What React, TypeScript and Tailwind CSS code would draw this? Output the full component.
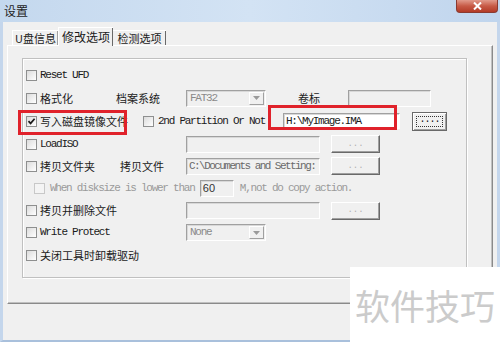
import React from "react"

const cjk = "font-['Noto_Sans_CJK_SC',sans-serif] text-[11px] leading-none text-[#1a1a1a]"
const mono = "font-['Liberation_Mono',monospace] text-[11px] leading-none tracking-[-1.25px] text-[#1a1a1a] whitespace-pre"

function Check({ checked = false, dim = false }: { checked?: boolean; dim?: boolean }) {
  return (
    <span
      className={`flex size-[11px] shrink-0 items-center justify-center border ${
        dim ? "border-[#c8c8c8] bg-[#f4f4f4]" : "border-[#8e8f8f] bg-gradient-to-br from-[#dcdcdc] to-white"
      }`}
    >
      {checked && (
        <svg width="9" height="9" viewBox="0 0 9 9">
          <path d="M1.5 4.2 L3.6 6.4 L7.6 1.8" fill="none" stroke="#1a1a1a" strokeWidth="1.7" />
        </svg>
      )}
    </span>
  )
}

function Field({ w, h = 17, text, white = false, cls = "" }: { w: number; h?: number; text?: string; white?: boolean; cls?: string }) {
  return (
    <div
      style={{ width: w, height: h }}
      className={`flex shrink-0 items-center overflow-hidden border border-[#a0a0a0] border-b-white border-r-white pl-[2px] shadow-[inset_1px_1px_0_#d8d8d8] ${
        white ? "bg-white" : "bg-[#f0f0f0]"
      }`}
    >
      {text && <span className={`${mono} ${cls}`}>{text}</span>}
    </div>
  )
}

function Dots({ focus = false }: { focus?: boolean }) {
  return focus ? (
    <div className="flex h-[19px] w-[35px] shrink-0 items-center justify-center border border-[#696969] bg-[#f0f0f0] shadow-[inset_1px_1px_0_#fff,inset_-1px_-1px_0_#a0a0a0]">
      <div className="flex h-[11px] w-[27px] items-end justify-center border border-dotted border-[#333] pb-[1px]">
        <span className="font-['Liberation_Mono',monospace] text-[10px] leading-none tracking-[-1px] text-[#111]">....</span>
      </div>
    </div>
  ) : (
    <div className="ml-[11px] flex h-[18px] w-[49px] shrink-0 items-center justify-center border border-white border-b-[#696969] border-r-[#696969] shadow-[inset_-1px_-1px_0_#a0a0a0]">
      <span className="font-['Liberation_Mono',monospace] text-[9px] leading-none tracking-[0px] text-[#b0b0b0]">...</span>
    </div>
  )
}

function Select({ text }: { text: string }) {
  return (
    <div className="flex h-[17px] w-[80px] shrink-0 items-center justify-between border border-[#a0a0a0] border-b-white border-r-white bg-[#f0f0f0] pl-[3px] shadow-[inset_1px_1px_0_#d8d8d8]">
      <span className={`${mono} text-[#8a8a8a]`}>{text}</span>
      <div className="mr-[1px] flex h-[13px] w-[15px] items-center justify-center border border-white border-b-[#a0a0a0] border-r-[#a0a0a0]">
        <svg width="7" height="4" viewBox="0 0 7 4">
          <path d="M0 0 H7 L3.5 4 Z" fill="#9a9a9a" />
        </svg>
      </div>
    </div>
  )
}

function Row({ h, children, cls = "" }: { h: number; children: React.ReactNode; cls?: string }) {
  return (
    <div style={{ height: h }} className={`flex items-center pl-[2px] ${cls}`}>
      {children}
    </div>
  )
}

function Label({ w, children, checked = false, font = cjk }: { w: number; children: React.ReactNode; checked?: boolean; font?: string }) {
  return (
    <div style={{ width: w }} className="flex shrink-0 items-center">
      <Check checked={checked} />
      <span className={`ml-[3px] ${font}`}>{children}</span>
    </div>
  )
}

export default function App() {
  return (
    <div className="relative h-[342px] w-[500px] overflow-hidden bg-[#f0f0f0] font-['Noto_Sans_CJK_SC',sans-serif]">
      <div className="flex h-[22px] items-center bg-gradient-to-r from-[#c4d8ee] via-[#d3e3f4] to-[#c0d5ed] pl-[4px]">
        <span className="text-[12px] leading-none text-[#1e1e1e]">设置</span>
      </div>

      <div className="flex h-[320px] border-x-[3px] border-b-[2px] border-x-[#c4d6ec] border-b-[#a9c0dc]">
        <div className="ml-[4px] flex flex-col">
          <div className="flex h-[23px] items-end pl-[5px]">
            <div className="flex h-[15px] w-[46px] items-center justify-center border-l border-t border-l-white border-t-white shadow-[inset_-1px_0_0_#a0a0a0]">
              <span className="text-[11px] leading-none text-[#1a1a1a]">U盘信息</span>
            </div>
            <div className="relative z-10 -mb-[1px] flex h-[19px] w-[55px] items-start justify-center border-l border-t border-l-white border-t-white bg-[#f0f0f0] pt-[3px] shadow-[inset_-1px_0_0_#696969]">
              <span className="text-[12px] leading-none text-[#1a1a1a]">修改选项</span>
            </div>
            <div className="flex h-[15px] w-[53px] items-center justify-center border-t border-t-white shadow-[inset_-1px_0_0_#696969]">
              <span className="text-[11px] leading-none text-[#1a1a1a]">检测选项</span>
            </div>
          </div>

          <div className="h-[259px] w-[486px] border border-white border-b-[#8a8a8a] border-r-[#8a8a8a] shadow-[inset_-1px_-1px_0_#c0c0c0] pl-[14px] pt-[12px]">
            <div className="h-[220px] w-[445px] border border-[#c0c0c0] shadow-[inset_1px_1px_0_#fff,1px_1px_0_#fff] pt-[5px] pl-[1px]">
              <Row h={23}>
                <Label w={90} font={mono}>Reset UFD</Label>
              </Row>
              <Row h={22}>
                <Label w={90}>格式化</Label>
                <span className={`w-[70px] shrink-0 ${cjk}`}>档案系统</span>
                <Select text="FAT32" />
                <span className={`ml-[32px] w-[50px] shrink-0 ${cjk}`}>卷标</span>
                <Field w={83} />
              </Row>
              <Row h={24}>
                <Label w={117} checked>写入磁盘镜像文件</Label>
                <div className="flex w-[140px] shrink-0 items-center">
                  <Check />
                  <span className={`ml-[4px] ${mono}`}>2nd Partition Or Not</span>
                </div>
                <Field w={117} h={16} white text="H:\MyImage.IMA" />
                <div className="ml-[12px]">
                  <Dots focus />
                </div>
              </Row>
              <Row h={22}>
                <Label w={160} font={mono}>LoadISO</Label>
                <Field w={134} />
                <Dots />
              </Row>
              <Row h={22}>
                <Label w={94}>拷贝文件夹</Label>
                <span className={`w-[66px] shrink-0 ${cjk}`}>拷贝文件</span>
                <Field w={134} text="C:\Documents and Setting:" cls="tracking-[-1.55px] text-[#6a6a6a]" />
                <Dots />
              </Row>
              <Row h={23} cls="pl-[10px]">
                <Check dim />
                <span className={`ml-[5px] ${mono} text-[#9a9a9a]`}>When disksize is lower than </span>
                <Field w={34} text="60" cls="font-['Liberation_Sans',sans-serif] tracking-normal text-[#333]" />
                <span className={`ml-[6px] ${mono} text-[#9a9a9a]`}>M,not do copy action.</span>
              </Row>
              <Row h={21}>
                <Label w={160}>拷贝并删除文件</Label>
                <Field w={134} />
                <Dots />
              </Row>
              <Row h={23}>
                <Label w={160} font={mono}>Write Protect</Label>
                <Select text="None" />
              </Row>
              <Row h={22}>
                <Label w={160}>关闭工具时卸载驱动</Label>
              </Row>
            </div>
          </div>
        </div>
      </div>

      <div className="absolute right-[2px] top-0 flex h-[13px] w-[42px] items-center justify-center rounded-b-[4px] border border-t-0 border-[#8a3a30] bg-gradient-to-b from-[#e19a8b] via-[#c75a46] to-[#b33a26]">
        <svg width="9" height="8" viewBox="0 0 9 8">
          <path d="M1 0.5 L8 7.5 M8 0.5 L1 7.5" stroke="#fff" strokeWidth="2" />
        </svg>
      </div>

      <div className="absolute left-[18px] top-[110px] h-[25px] w-[109px] border-[3px] border-[#e0222b]" />
      <div className="absolute left-[268px] top-[105px] h-[25px] w-[129px] border-[3px] border-[#e0222b]" />

      <div className="absolute left-[350px] top-[267px] flex h-[75px] w-[150px] items-center justify-center bg-white">
        <span className="text-[35px] leading-none tracking-[0px] text-[#cbcbcb]">软件技巧</span>
      </div>
    </div>
  )
}
